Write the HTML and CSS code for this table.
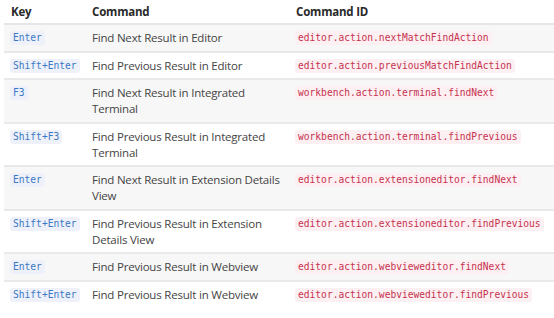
FILE: index.html
```html
<!DOCTYPE html>
<html lang="en">
<head>
    <meta charset="UTF-8">
    <title>Find keybindings</title>
    <link rel="stylesheet" href="styles.css">
</head>
<body>
    <table class="keys">
        <thead>
            <tr>
                <th class="col-key">Key</th>
                <th class="col-cmd">Command</th>
                <th>Command ID</th>
            </tr>
        </thead>
        <tbody>
            <tr>
                <td><code class="kb">Enter</code></td>
                <td>Find Next Result in Editor</td>
                <td><code class="id">editor.action.nextMatchFindAction</code></td>
            </tr>
            <tr>
                <td><code class="kb">Shift+Enter</code></td>
                <td>Find Previous Result in Editor</td>
                <td><code class="id">editor.action.previousMatchFindAction</code></td>
            </tr>
            <tr>
                <td><code class="kb">F3</code></td>
                <td>Find Next Result in Integrated Terminal</td>
                <td><code class="id">workbench.action.terminal.findNext</code></td>
            </tr>
            <tr>
                <td><code class="kb">Shift+F3</code></td>
                <td>Find Previous Result in Integrated Terminal</td>
                <td><code class="id">workbench.action.terminal.findPrevious</code></td>
            </tr>
            <tr>
                <td><code class="kb">Enter</code></td>
                <td>Find Next Result in Extension Details View</td>
                <td><code class="id">editor.action.extensioneditor.findNext</code></td>
            </tr>
            <tr>
                <td><code class="kb">Shift+Enter</code></td>
                <td>Find Previous Result in Extension Details View</td>
                <td><code class="id">editor.action.extensioneditor.findPrevious</code></td>
            </tr>
            <tr>
                <td><code class="kb">Enter</code></td>
                <td>Find Previous Result in Webview</td>
                <td><code class="id">editor.action.webvieweditor.findNext</code></td>
            </tr>
            <tr>
                <td><code class="kb">Shift+Enter</code></td>
                <td>Find Previous Result in Webview</td>
                <td><code class="id">editor.action.webvieweditor.findPrevious</code></td>
            </tr>
        </tbody>
    </table>
</body>
</html>
```

FILE: styles.css
```css
body {
    margin: 0;
    padding: 0 0 0 4px;
    background-color: #ffffff;
    font-family: 'Open Sans', sans-serif;
    font-size: 11.5px;
    letter-spacing: -0.2px;
    color: #444444;
}
.keys {
    width: 552px;
    border-collapse: collapse;
    table-layout: fixed;
}
.keys th {
    text-align: left;
    font-weight: bold;
    color: #2a2a2a;
    padding: 4px 7px 3px 7px;
    line-height: 16px;
    border-bottom: 2px solid #e6e6e6;
}
.col-key {
    width: 67px;
}
.col-cmd {
    width: 190px;
}
.keys td {
    vertical-align: top;
    padding: 5px 7px 4.5px 7px;
    line-height: 16px;
    border-bottom: 2px solid #e9e9e9;
}
.keys tbody tr:nth-child(odd) {
    background-color: #f7f7f7;
}
.keys tbody tr:last-child td {
    border-bottom: none;
}
code {
    display: inline-block;
    vertical-align: top;
    margin: 1px 0 0 -1px;
    font-family: 'DejaVu Sans Mono', monospace;
    font-size: 9.6px;
    letter-spacing: 0;
    line-height: 14px;
    padding: 0 3px;
    border-radius: 3px;
    white-space: nowrap;
}
.kb {
    color: #3b78c4;
    background-color: #eef1f9;
}
.id {
    color: #c7304f;
    background-color: #fcf0f2;
}
```
